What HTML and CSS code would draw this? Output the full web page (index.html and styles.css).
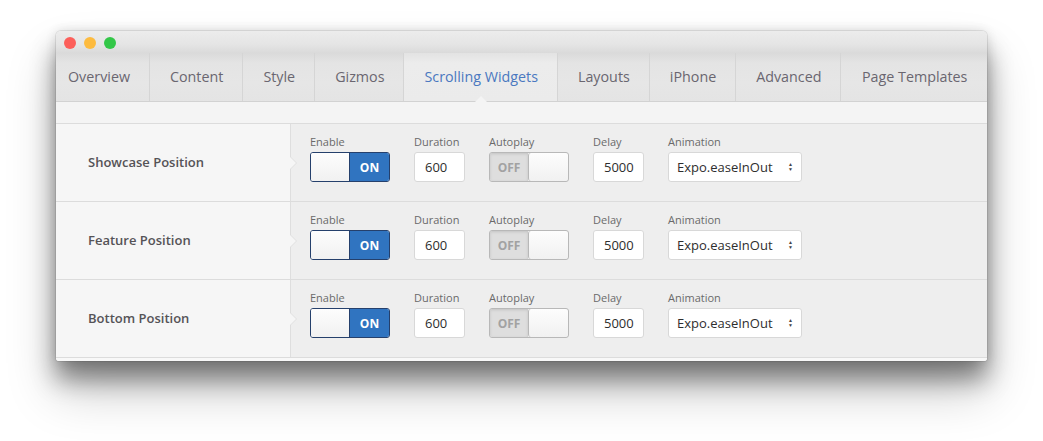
FILE: index.html
```html
<!DOCTYPE html>
<html>
<head>
<meta charset="utf-8">
<link rel="stylesheet" href="styles.css">
</head>
<body>
<div class="window">
  <div class="titlebar">
    <span class="light red"></span>
    <span class="light yellow"></span>
    <span class="light green"></span>
  </div>
  <nav class="tabs">
    <a class="tab first">Overview</a>
    <a class="tab">Content</a>
    <a class="tab">Style</a>
    <a class="tab">Gizmos</a>
    <a class="tab active">Scrolling Widgets</a>
    <a class="tab">Layouts</a>
    <a class="tab">iPhone</a>
    <a class="tab">Advanced</a>
    <a class="tab last">Page Templates</a>
  </nav>
  <div class="strip"></div>
  <div class="rows">
    <div class="row">
      <div class="row-label">Showcase Position</div>
      <div class="row-fields">
        <div class="field"><span class="flabel">Enable</span><div class="switch on"><span class="knob"></span><span class="state">ON</span></div></div>
        <div class="field"><span class="flabel">Duration</span><div class="input num">600</div></div>
        <div class="field"><span class="flabel">Autoplay</span><div class="switch off"><span class="state">OFF</span><span class="knob"></span></div></div>
        <div class="field"><span class="flabel">Delay</span><div class="input num">5000</div></div>
        <div class="field"><span class="flabel">Animation</span><div class="input select"><span>Expo.easeInOut</span><span class="arrows">&#9650;<br>&#9660;</span></div></div>
      </div>
    </div>
    <div class="row">
      <div class="row-label">Feature Position</div>
      <div class="row-fields">
        <div class="field"><span class="flabel">Enable</span><div class="switch on"><span class="knob"></span><span class="state">ON</span></div></div>
        <div class="field"><span class="flabel">Duration</span><div class="input num">600</div></div>
        <div class="field"><span class="flabel">Autoplay</span><div class="switch off"><span class="state">OFF</span><span class="knob"></span></div></div>
        <div class="field"><span class="flabel">Delay</span><div class="input num">5000</div></div>
        <div class="field"><span class="flabel">Animation</span><div class="input select"><span>Expo.easeInOut</span><span class="arrows">&#9650;<br>&#9660;</span></div></div>
      </div>
    </div>
    <div class="row">
      <div class="row-label">Bottom Position</div>
      <div class="row-fields">
        <div class="field"><span class="flabel">Enable</span><div class="switch on"><span class="knob"></span><span class="state">ON</span></div></div>
        <div class="field"><span class="flabel">Duration</span><div class="input num">600</div></div>
        <div class="field"><span class="flabel">Autoplay</span><div class="switch off"><span class="state">OFF</span><span class="knob"></span></div></div>
        <div class="field"><span class="flabel">Delay</span><div class="input num">5000</div></div>
        <div class="field"><span class="flabel">Animation</span><div class="input select"><span>Expo.easeInOut</span><span class="arrows">&#9650;<br>&#9660;</span></div></div>
      </div>
    </div>
  </div>
  <div class="foot"></div>
</div>
</body>
</html>
```
FILE: styles.css
```css
* { box-sizing: border-box; }
html, body { margin: 0; padding: 0; background: #fff; }
body {
  font-family: "Open Sans", "Liberation Sans", sans-serif;
  padding: 31px 0 0 56px;
  min-height: 441px;
}
.window {
  width: 931px;
  background: #f5f5f5;
  border-radius: 5px 5px 3px 3px;
  box-shadow: 0 18px 24px rgba(0,0,0,0.42), 0 30px 50px rgba(0,0,0,0.22), 0 0 12px rgba(0,0,0,0.12), 0 0 0 1px rgba(0,0,0,0.08);
  overflow: hidden;
}
.titlebar {
  height: 22px;
  display: flex;
  align-items: center;
  gap: 8px;
  padding-left: 8px;
  padding-top: 2px;
  background: linear-gradient(#ececec, #e5e5e5 60%, #dadada);
}
.light { width: 12px; height: 12px; border-radius: 50%; display: block; }
.red { background: #fc5f5a; }
.yellow { background: #fdbb3f; }
.green { background: #33c748; }
.tabs {
  display: flex;
  height: 49px;
  background: linear-gradient(#dadada, #e4e4e4 10px, #e6e6e6 30px, #e4e4e4);
  border-bottom: 1px solid #d2d2d2;
}
.tab {
  display: flex;
  align-items: center;
  justify-content: center;
  padding: 0 19px 1px 20px;
  font-size: 14.3px;
  white-space: nowrap;
  color: #6a6670;
  border-right: 1px solid #d5d5d5;
  position: relative;
}
.tab.first { padding-left: 12px; }
.tab.last { border-right: none; flex: 1; }
.tab.active {
  color: #4a78c0;
  background: linear-gradient(#e3e3e3, #ececec 10px, #ebebeb);
  border-left: 1px solid #d5d5d5;
  margin-left: -1px;
}
.tab.active::after {
  content: "";
  position: absolute;
  left: 50%;
  bottom: -1px;
  margin-left: -6px;
  border-left: 6px solid transparent;
  border-right: 6px solid transparent;
  border-bottom: 6px solid #f4f4f4;
}
.strip {
  height: 22px;
  background: #f4f4f4;
  border-bottom: 1px solid #dcdcdc;
}
.row {
  display: flex;
  height: 78px;
  border-bottom: 1px solid #dcdcdc;
}
.row-label {
  width: 235px;
  background: #f6f6f6;
  border-right: 1px solid #dedede;
  display: flex;
  align-items: center;
  padding: 0 0 2px 32px;
  font-size: 13px;
  font-weight: 600;
  color: #555357;
  position: relative;
}
.row-label::after {
  content: "";
  position: absolute;
  right: -6px;
  top: 33px;
  border-top: 6px solid transparent;
  border-bottom: 6px solid transparent;
  border-left: 6px solid #f6f6f6;
  filter: drop-shadow(1px 0 0 #e0e0e0);
}
.row-fields {
  flex: 1;
  background: #eeeeee;
  display: flex;
  gap: 24px;
  padding: 11px 0 0 19px;
}
.field { display: flex; flex-direction: column; }
.flabel {
  font-size: 11px;
  line-height: 14px;
  color: #6a6a6a;
  margin-bottom: 3px;
}
.switch {
  width: 80px;
  height: 30px;
  border-radius: 3px;
  display: flex;
  overflow: hidden;
}
.switch.on { border: 1px solid #25406c; }
.switch.off { border: 1px solid #b8b8b8; }
.knob {
  width: 39px;
  background: linear-gradient(#fdfdfd, #f1f1f1);
}
.switch.on .knob { border-right: 1px solid #25406c; }
.switch.off .knob { border-left: 1px solid #b8b8b8; width: 40px; border-radius: 3px; }
.state {
  flex: 1;
  display: flex;
  align-items: center;
  justify-content: center;
  font-size: 12px;
  font-weight: 700;
}
.switch.on .state { background: #3074c0; color: #fff; }
.switch.off .state { background: #dedede; color: #a2a2a2; box-shadow: inset 0 1px 3px rgba(0,0,0,0.12); }
.input {
  height: 30px;
  background: #fff;
  border: 1px solid #d8d8d8;
  border-radius: 3px;
  font-size: 13px;
  color: #2e2e2e;
  display: flex;
  align-items: center;
}
.num { width: 51px; padding-left: 10px; }
.select {
  width: 134px;
  padding: 0 8px 0 8px;
  justify-content: space-between;
}
.arrows {
  font-size: 5px;
  line-height: 5px;
  color: #444;
  text-align: center;
}
.foot { height: 3px; background: #f8f8f8; }
```
